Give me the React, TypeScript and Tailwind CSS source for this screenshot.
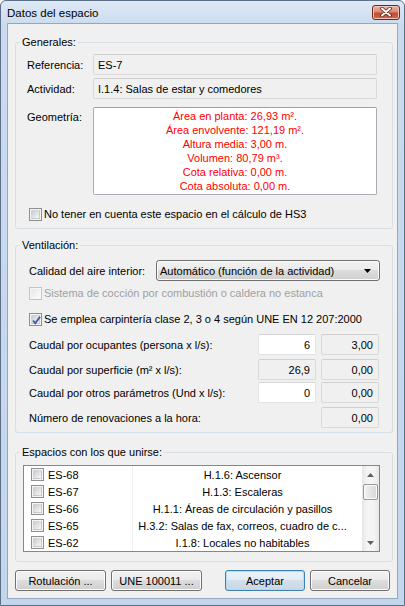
import clsx from 'clsx';

const font = "font-['Liberation_Sans',Arial,sans-serif]";

function Check({ checked = false, disabled = false }: { checked?: boolean; disabled?: boolean }) {
  return (
    <span
      className={clsx(
        'relative w-[13px] h-[13px] shrink-0 border flex items-center justify-center',
        disabled ? 'border-[#c4c4c4] bg-[#f7f7f7]' : 'border-[#8e8f8f] bg-[#f4f4f4]'
      )}
    >
      <span
        className={clsx(
          'w-[9px] h-[9px]',
          disabled
            ? 'bg-[linear-gradient(135deg,#e6e6e6,#fbfbfb)]'
            : 'bg-[linear-gradient(135deg,#c9ccd1,#f8f8f8)] border border-[#aeb3b9]/40'
        )}
      />
      {checked && (
        <svg className="absolute left-[1px] top-[1px]" width="11" height="11" viewBox="0 0 11 11">
          <path d="M2 5.5 L4.3 8.2 L9 1.8" fill="none" stroke="#3c5aa8" strokeWidth="1.9" />
        </svg>
      )}
    </span>
  );
}

function ReadField({ children, className }: { children?: React.ReactNode; className?: string }) {
  return (
    <div
      className={clsx(
        'h-[21px] rounded-[2px] border border-[#d9d9d9] border-t-[#cfcfcf] bg-[#f0f0f0] flex items-center',
        className
      )}
    >
      {children}
    </div>
  );
}

function WhiteField({ children, className }: { children?: React.ReactNode; className?: string }) {
  return (
    <div
      className={clsx(
        'h-[21px] rounded-[2px] border border-[#e0e3e8] border-t-[#d2d4d8] bg-white flex items-center',
        className
      )}
    >
      {children}
    </div>
  );
}

function Group({ title, className, children }: { title: string; className?: string; children: React.ReactNode }) {
  return (
    <fieldset className={clsx('ml-[7px] w-[378px] border border-[#d5dfe5] rounded-[3px] p-0', className)}>
      <legend className="ml-[4px] px-[2px] leading-[14px]">{title}</legend>
      {children}
    </fieldset>
  );
}

function Button({ children, className, primary = false }: { children: React.ReactNode; className?: string; primary?: boolean }) {
  return (
    <button
      className={clsx(
        'h-[21px] rounded-[3px] border flex items-center justify-center',
        primary
          ? 'border-[#3c7fb1] bg-[linear-gradient(#eaf3fa_0%,#e3edf5_45%,#d3dfea_50%,#c9d7e4_100%)] shadow-[inset_0_0_0_1px_#b4dcf6]'
          : 'border-[#707070] bg-[linear-gradient(#f2f2f2_0%,#ebebeb_45%,#dddddd_50%,#cfcfcf_100%)] shadow-[inset_0_0_0_1px_#fcfcfc]',
        className
      )}
    >
      {children}
    </button>
  );
}

const geometry = [
  'Área en planta: 26,93 m².',
  'Área envolvente: 121,19 m².',
  'Altura media: 3,00 m.',
  'Volumen: 80,79 m³.',
  'Cota relativa: 0,00 m.',
  'Cota absoluta: 0,00 m.',
];

const espacios = [
  ['ES-68', 'H.1.6: Ascensor'],
  ['ES-67', 'H.1.3: Escaleras'],
  ['ES-66', 'H.1.1: Áreas de circulación y pasillos'],
  ['ES-65', 'H.3.2: Salas de fax, correos, cuadro de c...'],
  ['ES-62', 'I.1.8: Locales no habitables'],
];

export default function App() {
  return (
    <div
      className={clsx(
        font,
        'w-[405px] h-[606px] flex flex-col border border-[#5b6f86] rounded-t-[6px] text-[11px] leading-[14px] text-black',
        'bg-[linear-gradient(#dfe9f5_0px,#cadbef_24px,#c4d6ec_100%)]'
      )}
    >
      {/* barra de título */}
      <div className="h-[22px] flex items-center justify-between pl-[6px] pr-[4px]">
        <span className="text-[11.5px] pt-[1px]">Datos del espacio</span>
        <div className="w-[28px] h-[15px] rounded-[3px] border border-[#6b2a1e] bg-[linear-gradient(#eab2a2_0%,#dc8a74_45%,#c8472f_55%,#d4654a_100%)] shadow-[inset_0_0_0_1px_#f0c4b7] flex items-center justify-center">
          <svg width="12" height="10" viewBox="0 0 12 10">
            <path d="M2 1.5 L10 8.5 M10 1.5 L2 8.5" stroke="#5a2418" strokeWidth="3.6" strokeLinecap="round" />
            <path d="M2 1.5 L10 8.5 M10 1.5 L2 8.5" stroke="#ffffff" strokeWidth="2" strokeLinecap="round" />
          </svg>
        </div>
      </div>

      <div className="flex-1 px-[6px] pb-[6px] flex">
        <div className="flex-1 border border-[#93a7bf] bg-[#f0f0f0] flex flex-col">
          {/* Generales */}
          <Group title="Generales:" className="mt-[11px]">
            <div className="pl-[11px] pt-[5px] pb-[7px] flex flex-col">
              <div className="flex items-center">
                <span className="w-[66px]">Referencia:</span>
                <ReadField className="w-[284px] pl-[4px]">ES-7</ReadField>
              </div>
              <div className="flex items-center mt-[3px]">
                <span className="w-[66px]">Actividad:</span>
                <ReadField className="w-[284px] pl-[4px]">I.1.4: Salas de estar y comedores</ReadField>
              </div>
              <div className="flex items-start mt-[8px]">
                <span className="w-[66px] pt-[3px]">Geometría:</span>
                <div className="w-[284px] h-[88px] rounded-[2px] border border-[#a9acb2] border-t-[#9da0a6] bg-white flex flex-col items-center justify-center text-[#ff0000]">
                  {geometry.map((g) => (
                    <span key={g}>{g}</span>
                  ))}
                </div>
              </div>
              <div className="flex items-center gap-[2px] mt-[12px] ml-[2px] h-[14px]">
                <Check />
                <span>No tener en cuenta este espacio en el cálculo de HS3</span>
              </div>
            </div>
          </Group>

          {/* Ventilación */}
          <Group title="Ventilación:" className="mt-[9px]">
            <div className="pl-[13px] pt-[8px] pb-[4px] flex flex-col">
              <div className="flex items-center">
                <span className="w-[127px]">Calidad del aire interior:</span>
                <div className="w-[224px] h-[21px] rounded-[3px] border border-[#707070] bg-[linear-gradient(#f2f2f2_0%,#ebebeb_45%,#dddddd_50%,#cfcfcf_100%)] shadow-[inset_0_0_0_1px_#fbfbfb] flex items-center justify-between pl-[3px] pr-[8px]">
                  <span>Automático (función de la actividad)</span>
                  <svg width="7" height="4" viewBox="0 0 7 4">
                    <path d="M0 0 H7 L3.5 4 Z" fill="#000" />
                  </svg>
                </div>
              </div>
              <div className="flex items-center gap-[2px] mt-[5px] h-[14px] text-[#a0a0a0]">
                <Check disabled />
                <span>Sistema de cocción por combustión o caldera no estanca</span>
              </div>
              <div className="flex items-center gap-[2px] mt-[12px] h-[14px]">
                <Check checked />
                <span>Se emplea carpintería clase 2, 3 o 4 según UNE EN 12 207:2000</span>
              </div>
              <div className="flex items-center mt-[8px]">
                <span className="w-[229px]">Caudal por ocupantes (persona x l/s):</span>
                <WhiteField className="w-[58px] justify-end pr-[5px]">6</WhiteField>
                <ReadField className="w-[58px] ml-[5px] justify-end pr-[5px]">3,00</ReadField>
              </div>
              <div className="flex items-center mt-[4px]">
                <span className="w-[229px]">Caudal por superficie (m² x l/s):</span>
                <ReadField className="w-[58px] justify-end pr-[5px]">26,9</ReadField>
                <ReadField className="w-[58px] ml-[5px] justify-end pr-[5px]">0,00</ReadField>
              </div>
              <div className="flex items-center mt-[2px]">
                <span className="w-[229px]">Caudal por otros parámetros (Und x l/s):</span>
                <WhiteField className="w-[58px] justify-end pr-[5px]">0</WhiteField>
                <ReadField className="w-[58px] ml-[5px] justify-end pr-[5px]">0,00</ReadField>
              </div>
              <div className="flex items-center mt-[4px]">
                <span className="w-[292px]">Número de renovaciones a la hora:</span>
                <ReadField className="w-[58px] justify-end pr-[5px]">0,00</ReadField>
              </div>
            </div>
          </Group>

          {/* Espacios */}
          <Group title="Espacios con los que unirse:" className="mt-[12px]">
            <div className="pl-[7px] pt-[6px] pb-[9px]">
              <div className="w-[357px] h-[87px] border border-[#828790] bg-white flex">
                <div className="flex-1 flex flex-col">
                  {espacios.map(([id, act]) => (
                    <div key={id} className="h-[17.3px] flex items-center">
                      <div className="w-[109px] h-full flex items-center gap-[4px] pl-[7px] border-r border-[#f0f0f0]">
                        <Check />
                        <span>{id}</span>
                      </div>
                      <div className="flex-1 min-w-0 pr-[10px] text-center truncate">{act}</div>
                    </div>
                  ))}
                </div>
                {/* barra de desplazamiento */}
                <div className="w-[17px] bg-[linear-gradient(90deg,#e6e6e6,#f5f5f5_30%,#f5f5f5_70%,#e6e6e6)] flex flex-col items-center">
                  <div className="h-[17px] flex items-center justify-center">
                    <svg width="7" height="4" viewBox="0 0 7 4">
                      <path d="M0 4 H7 L3.5 0 Z" fill="#606060" />
                    </svg>
                  </div>
                  <div className="w-[15px] h-[16px] mt-[1px] rounded-[2px] border border-[#979797] bg-[linear-gradient(90deg,#f3f3f3,#e4e4e4_50%,#d8d8d8)] shadow-[inset_0_0_0_1px_#fbfbfb]" />
                  <div className="flex-1" />
                  <div className="h-[17px] flex items-center justify-center">
                    <svg width="7" height="4" viewBox="0 0 7 4">
                      <path d="M0 0 H7 L3.5 4 Z" fill="#606060" />
                    </svg>
                  </div>
                </div>
              </div>
            </div>
          </Group>

          {/* Botones */}
          <div className="flex items-center ml-[7px] mt-[8px]">
            <Button className="w-[91px]">Rotulación ...</Button>
            <Button className="w-[91px] ml-[5px]">UNE 100011 ...</Button>
            <Button primary className="w-[80px] ml-[23px]">Aceptar</Button>
            <Button className="w-[80px] ml-[5px]">Cancelar</Button>
          </div>
        </div>
      </div>
    </div>
  );
}
